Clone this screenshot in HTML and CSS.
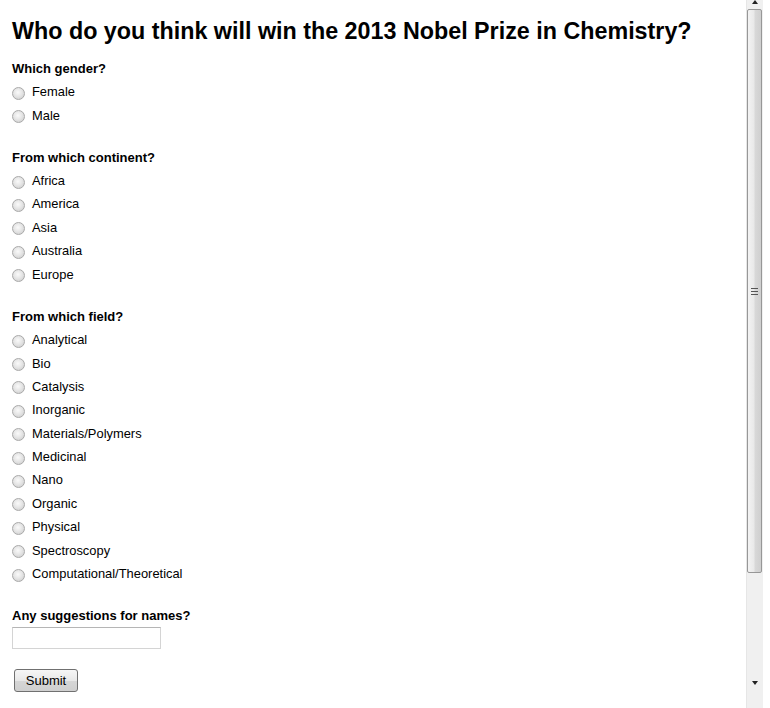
FILE: index.html
```html
<!DOCTYPE html>
<html>
<head>
<meta charset="utf-8">
<title>Nobel Prize poll</title>
<link rel="stylesheet" href="styles.css">
</head>
<body>
<main class="page">
  <h1 class="title">Who do you think will win the 2013 Nobel Prize in Chemistry?</h1>
  <form class="poll">
    <section class="question">
      <div class="q-label">Which gender?</div>
      <label class="opt"><span class="radio"></span>Female</label>
      <label class="opt"><span class="radio"></span>Male</label>
    </section>
    <section class="question">
      <div class="q-label">From which continent?</div>
      <label class="opt"><span class="radio"></span>Africa</label>
      <label class="opt"><span class="radio"></span>America</label>
      <label class="opt"><span class="radio"></span>Asia</label>
      <label class="opt"><span class="radio"></span>Australia</label>
      <label class="opt"><span class="radio"></span>Europe</label>
    </section>
    <section class="question">
      <div class="q-label">From which field?</div>
      <label class="opt"><span class="radio"></span>Analytical</label>
      <label class="opt"><span class="radio"></span>Bio</label>
      <label class="opt"><span class="radio"></span>Catalysis</label>
      <label class="opt"><span class="radio"></span>Inorganic</label>
      <label class="opt"><span class="radio"></span>Materials/Polymers</label>
      <label class="opt"><span class="radio"></span>Medicinal</label>
      <label class="opt"><span class="radio"></span>Nano</label>
      <label class="opt"><span class="radio"></span>Organic</label>
      <label class="opt"><span class="radio"></span>Physical</label>
      <label class="opt"><span class="radio"></span>Spectroscopy</label>
      <label class="opt"><span class="radio"></span>Computational/Theoretical</label>
    </section>
    <section class="question last">
      <div class="q-label">Any suggestions for names?</div>
      <div class="text-input"></div>
    </section>
    <div class="submit">Submit</div>
  </form>
</main>
<div class="scrollbar">
  <div class="arrow up"></div>
  <div class="thumb"><div class="grip"><i></i><i></i><i></i></div></div>
  <div class="arrow down"></div>
</div>
</body>
</html>
```
FILE: styles.css
```css
html, body {
  margin: 0;
  padding: 0;
  background: #fff;
  overflow: hidden;
}
body {
  font-family: "Liberation Sans", Arial, sans-serif;
  color: #000;
}
.page {
  padding: 0 12px;
}
.title {
  margin: 17px 0 13px;
  font-size: 23.3px;
  line-height: 28px;
  font-weight: bold;
  color: #000;
}
.poll {
  display: flex;
  flex-direction: column;
}
.question {
  display: flex;
  flex-direction: column;
  margin-bottom: 20.1px;
}
.question.last {
  margin-bottom: 0;
}
.q-label {
  height: 22px;
  line-height: 22px;
  font-size: 13px;
  font-weight: bold;
  color: #000;
}
.opt {
  height: 23.4px;
  display: flex;
  align-items: center;
  font-size: 12.9px;
  color: #000;
}
.radio {
  width: 13px;
  height: 13px;
  box-sizing: border-box;
  border-radius: 50%;
  border: 1px solid #a9a9a9;
  background: radial-gradient(circle at 45% 40%, #fafafa 0%, #e6e6e6 45%, #c8c8c8 100%);
  margin: 3px 7px 0 0;
  flex: none;
}
.text-input {
  width: 149px;
  height: 22px;
  box-sizing: border-box;
  border: 1px solid #d4d4d4;
  border-top-color: #b5b5b5;
  margin-top: 0;
  background: #fff;
}
.submit {
  align-self: flex-start;
  margin: 20px 0 0 2px;
  width: 64px;
  height: 23px;
  box-sizing: border-box;
  border: 1px solid #707070;
  border-radius: 3px;
  background: linear-gradient(#f6f6f6 0%, #e8e8e8 50%, #d6d6d6 51%, #cfcfcf 100%);
  font-size: 13px;
  line-height: 21px;
  text-align: center;
  color: #000;
}
.scrollbar {
  position: fixed;
  top: 0;
  left: 746px;
  width: 17px;
  height: 708px;
  background: #f0f0f0;
  border-left: 1px solid #e6e6e6;
  box-sizing: border-box;
}
.arrow {
  position: absolute;
  left: 5px;
  width: 0;
  height: 0;
  border-left: 3.5px solid transparent;
  border-right: 3.5px solid transparent;
}
.arrow.up {
  top: 0;
  border-bottom: 4px solid #222;
}
.arrow.down {
  top: 681px;
  border-top: 4px solid #222;
}
.thumb {
  position: absolute;
  top: 9px;
  left: 0;
  width: 15px;
  height: 564px;
  box-sizing: border-box;
  border: 1px solid #979797;
  border-radius: 2px;
  background: linear-gradient(to right, #f3f3f3 0%, #e9e9e9 45%, #d8d8d8 55%, #cfcfcf 100%);
  display: flex;
  align-items: center;
  justify-content: center;
}
.grip {
  display: flex;
  flex-direction: column;
  gap: 2px;
}
.grip i {
  display: block;
  width: 7px;
  height: 1px;
  background: #555;
}
```
